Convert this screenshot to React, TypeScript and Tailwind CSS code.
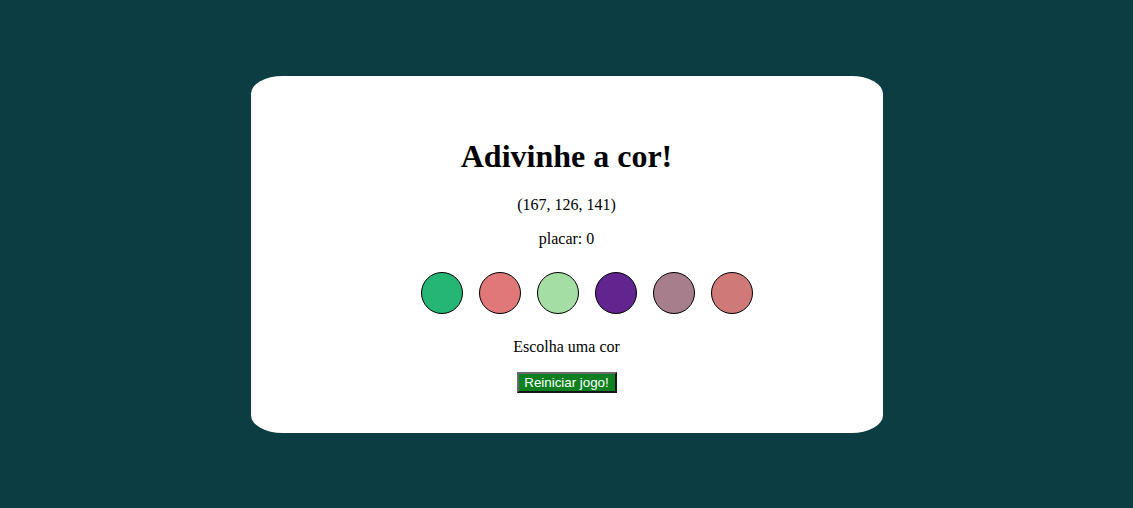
import React from "react";

const colors = ["#25b574", "#e07779", "#a5dea4", "#62248f", "#a77e8c", "#cf7a79"];

const App = () => {
  return (
    <div className="min-h-[508px] w-full bg-[#0b3d43] flex justify-center pt-[76px] font-['Liberation_Serif',serif] text-black">
      <div className="w-[632px] h-[357px] bg-white rounded-[5%] flex flex-col items-center pt-[62px]">
        <h1 className="text-[32px] font-bold leading-[37px] mb-[21px]">Adivinhe a cor!</h1>
        <p className="text-base leading-[18px] mb-4">(167, 126, 141)</p>
        <p className="text-base leading-[18px]">placar: 0</p>
        <div className="flex gap-4 mt-6 mb-6 pl-10">
          {colors.map((c) => (
            <div
              key={c}
              className="w-[42px] h-[42px] rounded-full border border-black"
              style={{ backgroundColor: c }}
            />
          ))}
        </div>
        <p className="text-base leading-[18px] mb-4">Escolha uma cor</p>
        <button className="w-[100px] h-[21px] bg-[#0e8020] text-white text-[13.33px] leading-none font-['Liberation_Sans',sans-serif] border-2 [border-style:outset] border-[#6a6a6a]">
          Reiniciar jogo!
        </button>
      </div>
    </div>
  );
};

export default App;
